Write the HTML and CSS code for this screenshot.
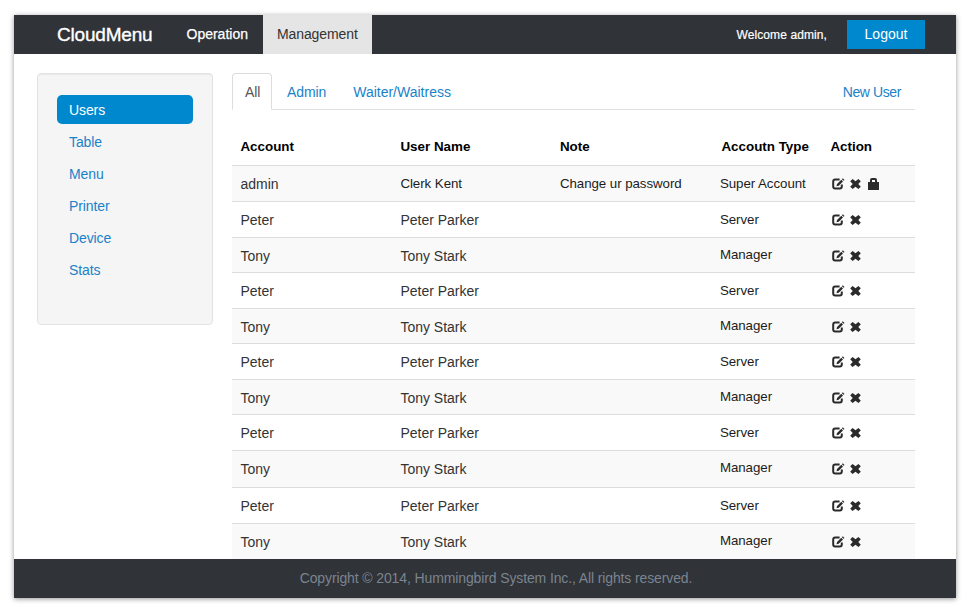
FILE: index.html
```html
<!DOCTYPE html>
<html lang="en">
<head>
<meta charset="utf-8">
<title>CloudMenu</title>
<link rel="stylesheet" href="styles.css">
</head>
<body>
<svg class="sprite" width="0" height="0" aria-hidden="true">
  <symbol id="edit" viewBox="0 0 13 12"><path d="M7.6 1.4H3.2Q1.2 1.4 1.2 3.4V8.6Q1.2 10.6 3.2 10.6H7.8Q9.8 10.6 9.8 8.6V6.6" fill="none" stroke="#2b2b2b" stroke-width="2"/><path d="M4.5 8.3L5 6L9.3 1.8L11 3.4L6.7 7.7ZM9.9 1.2L10.8.3L12.5 1.9L11.6 2.8Z" fill="#2b2b2b"/></symbol>
  <symbol id="remove" viewBox="0 0 11 10"><path d="M2.6 0L5.5 2.3L8.4 0L10.8 2.3L8.3 5L10.8 7.7L8.4 10L5.5 7.7L2.6 10L.2 7.7L2.7 5L.2 2.3Z" fill="#2b2b2b"/></symbol>
  <symbol id="lock" viewBox="0 0 11 12"><path d="M0 4H2V2Q2 0 4 0H7Q9 0 9 2V4H11V12H0ZM4 4H7V2H4Z" fill="#2b2b2b" fill-rule="evenodd"/></symbol>
</svg>
<div class="page">
  <header class="navbar">
    <div class="brand">CloudMenu</div>
    <nav class="main-nav"><a>Operation</a><a class="current">Management</a></nav>
    <div class="welcome">Welcome admin,</div>
    <a class="logout">Logout</a>
  </header>
  <main class="content">
    <aside class="sidebar">
      <a class="active">Users</a><a>Table</a><a>Menu</a><a>Printer</a><a>Device</a><a>Stats</a>
    </aside>
    <section class="panel">
      <div class="tabs"><a class="tab selected">All</a><a class="tab">Admin</a><a class="tab last">Waiter/Waitress</a><a class="new-user">New User</a></div>
      <div class="row head"><span>Account</span><span>User Name</span><span>Note</span><span class="type">Accoutn Type</span><span>Action</span></div>
      <div class="row"><span>admin</span><span class="light">Clerk Kent</span><span class="light">Change ur password</span><span class="light">Super Account</span><span class="actions"><svg class="edit"><use href="#edit"/></svg><svg class="remove"><use href="#remove"/></svg><svg class="lock"><use href="#lock"/></svg></span></div>
      <div class="row"><span>Peter</span><span>Peter Parker</span><span></span><span class="light">Server</span><span class="actions"><svg class="edit"><use href="#edit"/></svg><svg class="remove"><use href="#remove"/></svg></span></div>
      <div class="row short"><span>Tony</span><span>Tony Stark</span><span></span><span class="light up">Manager</span><span class="actions"><svg class="edit"><use href="#edit"/></svg><svg class="remove"><use href="#remove"/></svg></span></div>
      <div class="row"><span>Peter</span><span>Peter Parker</span><span></span><span class="light">Server</span><span class="actions"><svg class="edit"><use href="#edit"/></svg><svg class="remove"><use href="#remove"/></svg></span></div>
      <div class="row short"><span>Tony</span><span>Tony Stark</span><span></span><span class="light up">Manager</span><span class="actions"><svg class="edit"><use href="#edit"/></svg><svg class="remove"><use href="#remove"/></svg></span></div>
      <div class="row"><span>Peter</span><span>Peter Parker</span><span></span><span class="light">Server</span><span class="actions"><svg class="edit"><use href="#edit"/></svg><svg class="remove"><use href="#remove"/></svg></span></div>
      <div class="row short"><span>Tony</span><span>Tony Stark</span><span></span><span class="light up">Manager</span><span class="actions"><svg class="edit"><use href="#edit"/></svg><svg class="remove"><use href="#remove"/></svg></span></div>
      <div class="row"><span>Peter</span><span>Peter Parker</span><span></span><span class="light">Server</span><span class="actions"><svg class="edit"><use href="#edit"/></svg><svg class="remove"><use href="#remove"/></svg></span></div>
      <div class="row tall"><span>Tony</span><span>Tony Stark</span><span></span><span class="light up">Manager</span><span class="actions"><svg class="edit"><use href="#edit"/></svg><svg class="remove"><use href="#remove"/></svg></span></div>
      <div class="row"><span>Peter</span><span>Peter Parker</span><span></span><span class="light">Server</span><span class="actions"><svg class="edit"><use href="#edit"/></svg><svg class="remove"><use href="#remove"/></svg></span></div>
      <div class="row"><span>Tony</span><span>Tony Stark</span><span></span><span class="light up">Manager</span><span class="actions"><svg class="edit"><use href="#edit"/></svg><svg class="remove"><use href="#remove"/></svg></span></div>
    </section>
  </main>
  <footer class="footer">Copyright © 2014, Hummingbird System Inc., All rights reserved.</footer>
</div>
</body>
</html>
```
FILE: styles.css
```css
* { box-sizing: border-box; }
body {
  margin: 0;
  padding: 15px 15px 9px 14px;
  height: 607px;
  overflow: hidden;
  background: #fff;
  font: 14px/20px "Liberation Sans", Arial, sans-serif;
  color: #333;
}
.sprite { position: absolute; }
.page {
  display: flex;
  flex-direction: column;
  width: 942px;
  height: 583px;
  background: #fff;
  box-shadow: 0 1px 5px rgba(0, 0, 0, .42);
}

.navbar {
  display: flex;
  align-items: center;
  flex: 0 0 39px;
  padding: 0 31px 0 43px;
  background: #303338;
  color: #fff;
}
.brand {
  width: 115px;
  font-size: 19px;
  letter-spacing: -.2px;
  -webkit-text-stroke: .35px #fff;
}
.main-nav { display: flex; }
.main-nav a {
  height: 39px;
  line-height: 39px;
  padding: 0 14px 0 14.5px;
  -webkit-text-stroke: .25px #fff;
}
.main-nav .current {
  width: 109px;
  margin-left: 1px;
  padding: 0 0 0 14px;
  background: #e5e5e5;
  color: #333;
  letter-spacing: -.1px;
  -webkit-text-stroke: 0;
}
.welcome {
  margin-left: auto;
  margin-right: 20px;
  font-size: 12px;
  letter-spacing: .1px;
  -webkit-text-stroke: .2px #fff;
}
.logout {
  width: 78px;
  height: 29px;
  line-height: 29px;
  background: #0088cf;
  text-align: center;
}

.content { display: flex; flex: 0 0 505px; overflow: hidden; padding: 19px 41px 0 23px; }
.sidebar {
  display: flex;
  flex-direction: column;
  gap: 3px;
  width: 176px;
  height: 252px;
  margin-right: 19px;
  padding: 21px 19px;
  border: 1px solid #e3e3e3;
  border-radius: 4px;
  background: #f5f5f5;
  box-shadow: inset 0 1px 1px rgba(0, 0, 0, .05);
}
.sidebar a {
  height: 29px;
  line-height: 31px;
  padding-left: 12px;
  border-radius: 5px;
  color: #1a82c9;
  letter-spacing: -.1px;
}
.sidebar .active { background: #0088cf; color: #fff; line-height: 30px; }

.panel { width: 683px; }
.tabs {
  display: flex;
  height: 37px;
  border-bottom: 1px solid #e0e0e0;
  color: #1a82c9;
}
.tab { height: 37px; line-height: 36px; padding: 0 12px 0 14px; border: 1px solid transparent; letter-spacing: -.1px; }
.tab.selected {
  width: 40px;
  padding: 0 0 0 12px;
  border-color: #ddd;
  border-bottom-color: #fff;
  border-radius: 4px 4px 0 0;
  background: #fff;
  color: #555;
}
.tab.last { padding-left: 13px; letter-spacing: 0; }
.new-user { margin-left: auto; margin-right: 14px; line-height: 38px; letter-spacing: -.4px; }

.row {
  display: grid;
  grid-template-columns: 160px 159.5px 160px 110.5px 1fr;
  height: 36px;
  padding-left: 8.4px;
  border-top: 1px solid #ddd;
  line-height: 36px;
}
.row:nth-child(odd) { background: #f9f9f9; }
.row.short { height: 35px; }
.row.tall { height: 37px; }
.row.head {
  height: 55px;
  padding-top: 19px;
  border: 0;
  background: none;
  color: #000;
  font-size: 13.4px;
  font-weight: bold;
}
.head .type { padding-left: 1.5px; }
.light { font-size: 13.3px; letter-spacing: -.05px; color: #1c1c1c; line-height: 35px; }
.light.up { line-height: 34px; }
.actions { display: flex; padding: 12px 0 0 1.6px; }
.edit { width: 13px; height: 12px; margin-right: 5px; }
.remove { width: 11px; height: 10px; margin: 1px 7px 0 0; }
.lock { width: 11px; height: 12px; }

.footer {
  flex: 0 0 39px;
  padding-left: 22px;
  background: #303338;
  color: #7b8490;
  line-height: 39px;
  letter-spacing: -.12px;
  text-align: center;
}
```
